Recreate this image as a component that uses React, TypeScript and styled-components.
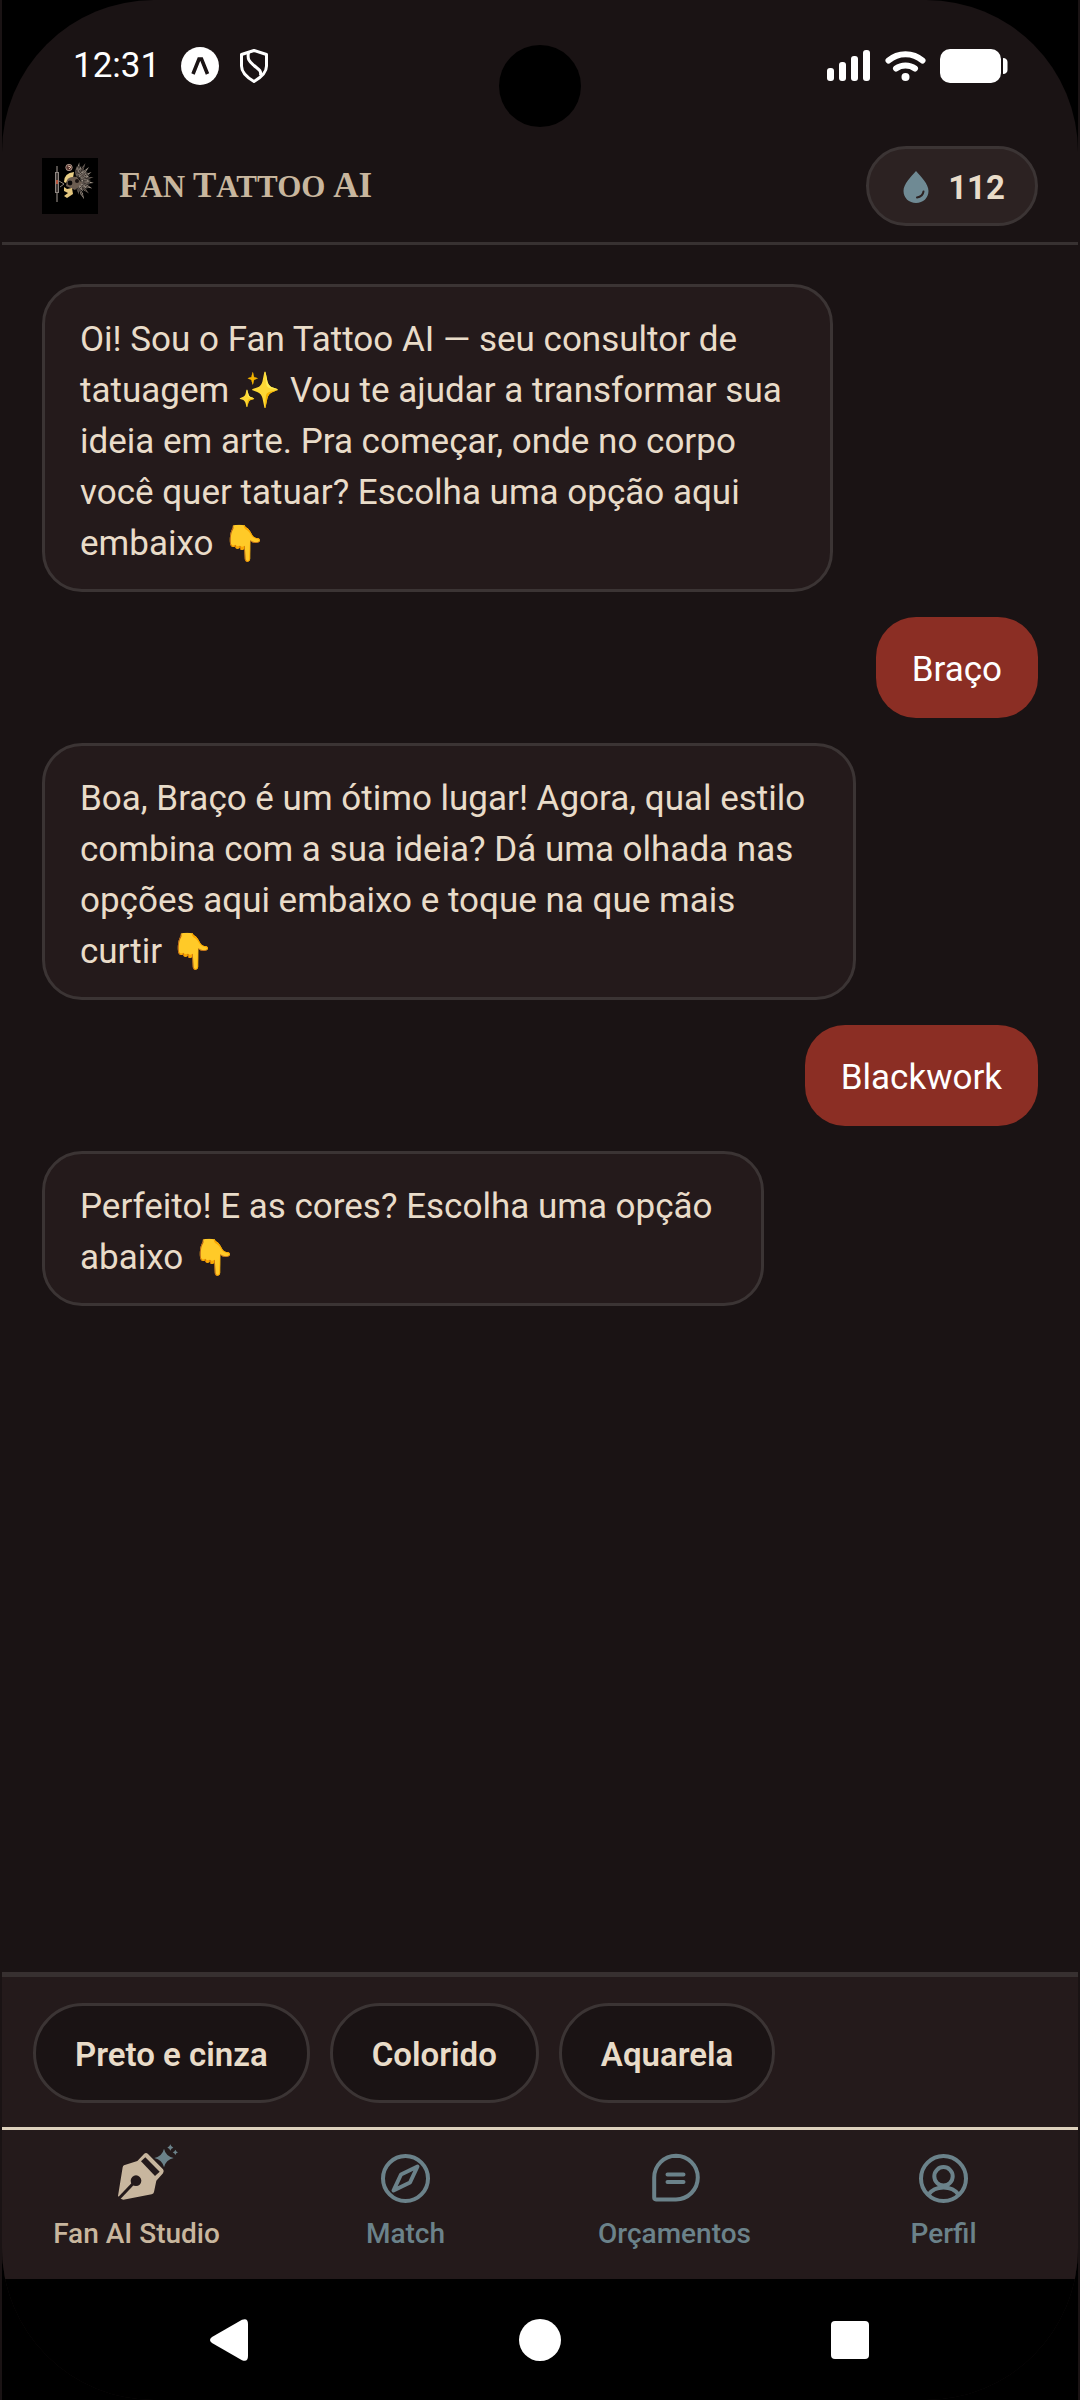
import styled, { createGlobalStyle, css } from "styled-components";
import { useState } from "react";

const colors = {
  background: "#1a1314",
  surface: "#241a1b",
  pill: "#2c2222",
  border: "#3b3434",
  text: "#e9dcc9",
  gold: "#c8b69e",
  muted: "#6b828a",
  accent: "#8b2e24",
};

type Message = {
  from: "bot" | "user";
  text: string;
};

const messages: Message[] = [
  {
    from: "bot",
    text: "Oi! Sou o Fan Tattoo AI — seu consultor de\ntatuagem ✨ Vou te ajudar a transformar sua\nideia em arte. Pra começar, onde no corpo\nvocê quer tatuar? Escolha uma opção aqui\nembaixo 👇",
  },
  { from: "user", text: "Braço" },
  {
    from: "bot",
    text: "Boa, Braço é um ótimo lugar! Agora, qual estilo\ncombina com a sua ideia? Dá uma olhada nas\nopções aqui embaixo e toque na que mais\ncurtir 👇",
  },
  { from: "user", text: "Blackwork" },
  {
    from: "bot",
    text: "Perfeito! E as cores? Escolha uma opção\nabaixo 👇",
  },
];

const options = ["Preto e cinza", "Colorido", "Aquarela"];

export default function App() {
  const [active, setActive] = useState("Fan AI Studio");

  return (
    <>
      <GlobalStyle />
      <Device>
        <Screen>
          <StatusBar />
          <Header>
            <Brand>
              <Logo />
              <Title>
                <Cap>F</Cap>an <Cap>T</Cap>attoo <Cap>AI</Cap>
              </Title>
            </Brand>
            <Credits type="button">
              <DropIcon />
              112
            </Credits>
          </Header>
          <Chat>
            {messages.map((message) => (
              <Bubble key={message.text} $from={message.from}>
                {message.text}
              </Bubble>
            ))}
          </Chat>
          <Options>
            {options.map((option) => (
              <Chip key={option} type="button">
                {option}
              </Chip>
            ))}
          </Options>
          <TabBar>
            {tabs.map(({ label, href, Icon }) => (
              <Tab
                key={label}
                href={href}
                $active={label === active}
                onClick={() => setActive(label)}
              >
                <Icon />
                {label}
              </Tab>
            ))}
          </TabBar>
          <SystemNav />
        </Screen>
      </Device>
    </>
  );
}

const StatusBar = () => (
  <StatusContainer>
    <StatusGroup>
      <Time>12:31</Time>
      <svg width="38" height="38" viewBox="0 0 38 38">
        <circle cx="19" cy="19" r="19" fill="#fff" />
        <path
          d="M12 27 L18 12 H20.5 L26.5 27"
          fill="none"
          stroke={colors.background}
          strokeWidth="3.6"
        />
      </svg>
      <svg width="28" height="34" viewBox="0 0 28 34">
        <g fill="none" stroke="#fff" strokeWidth="3" strokeLinejoin="round">
          <path d="M14 1.5 L26.5 5.5 V17 C26.5 24 20 29 14 32.5 C8 29 1.5 24 1.5 17 V5.5 Z" />
          <path d="M8.5 3.5 C7 11 10 13 14 16.5 C18 20 21.5 21 20.5 26.5" />
        </g>
      </svg>
    </StatusGroup>
    <Camera />
    <StatusGroup $tight>
      <svg width="44" height="32" viewBox="0 0 44 32" fill="#fff">
        <rect x="0" y="18" width="7" height="13" rx="3" />
        <rect x="12" y="12" width="7" height="19" rx="3" />
        <rect x="24" y="6" width="7" height="25" rx="3" />
        <rect x="36" y="0" width="7" height="31" rx="3" />
      </svg>
      <svg width="41" height="32" viewBox="0 0 41 32">
        <g fill="none" stroke="#fff" strokeWidth="6" strokeLinecap="round">
          <path d="M3.5 10.5 C13 2 28 2 37.5 10.5" />
          <path d="M11 18.5 C16.5 14.5 24.5 14.5 30 18.5" />
        </g>
        <circle cx="20.5" cy="27" r="4" fill="#fff" />
      </svg>
      <svg width="68" height="34" viewBox="0 0 68 34" fill="#fff">
        <rect x="0" y="0" width="61" height="34" rx="10" />
        <path d="M63 9 C66 9 67.5 11 67.5 13 V21 C67.5 23 66 25 63 25 Z" />
      </svg>
    </StatusGroup>
  </StatusContainer>
);

const SystemNav = () => (
  <SystemNavContainer>
    <SystemButton type="button" aria-label="Voltar">
      <svg width="44" height="44" viewBox="0 0 44 44" fill="#fff">
        <path d="M4 19 L34 1.8 Q40 -0.5 40 6 V38 Q40 44.5 34 42.2 L4 25 Q0 22 4 19 Z" />
      </svg>
    </SystemButton>
    <SystemButton type="button" aria-label="Início">
      <svg width="44" height="44" viewBox="0 0 44 44" fill="#fff">
        <circle cx="22" cy="22" r="21" />
      </svg>
    </SystemButton>
    <SystemButton type="button" aria-label="Recentes">
      <svg width="44" height="44" viewBox="0 0 44 44" fill="#fff">
        <rect x="3" y="3" width="38" height="38" rx="4" />
      </svg>
    </SystemButton>
  </SystemNavContainer>
);

// headdress feathers, as [angle, length] around the back of the skull
const feathers = [
  [-88, 15], [-80, 19], [-71, 16], [-62, 20], [-54, 14], [-47, 19],
  [-38, 15], [-30, 18], [-21, 15], [-13, 18], [-4, 15], [6, 18],
  [15, 14], [25, 18], [34, 14], [44, 18], [55, 13], [66, 20], [78, 14],
];

const Logo = () => (
  <LogoSvg viewBox="0 0 56 56" role="img" aria-label="Fan Tattoo AI">
    {feathers.map(([angle, length], i) => (
      <g key={angle} transform={`translate(34 23) rotate(${angle})`}>
        <path
          d={`M4 0 L${length - 6} -1.2 L${length} 0 L${length - 6} 1.2 Z`}
          fill={i % 3 === 0 ? "#6e635b" : "#a3978b"}
        />
        <path d={`M7 0 H${length - 4}`} stroke="#2a2421" strokeWidth="0.8" />
      </g>
    ))}
    <circle cx="27" cy="9.5" r="3.2" fill="#5c3a34" stroke="#a38e82" />
    <path d="M26 8 L29 9 L27 11" stroke="#d8b9a0" fill="none" />
    <path d="M22 24 Q22 15 32 14 L31 20 Q26 20 24 25 Z" fill="#e9cf86" />
    <path d="M25 22 Q28 18 35 19 L40 25 L33 32 L24 28 Z" fill="#6b5c50" />
    <circle cx="28" cy="25" r="2.4" fill="#0a0808" />
    <circle cx="35" cy="23" r="2" fill="#1a1210" />
    <path d="M22 29 L25 31 L30 30 L31 36 L25 40 L22 38 L26 35 L22 33 Z" fill="#e3c67e" />
    <path d="M17 23 L22 26 L18 29" stroke="#8d8279" fill="none" />
    <path d="M15 8 V44" stroke="#77706b" strokeWidth="1.4" />
    <rect x="13" y="14" width="4" height="21" fill="#8d8681" />
    <path d="M15 15 V34" stroke="#2b2523" strokeWidth="1.6" />
    <rect x="14" y="22" width="2" height="4" fill="#b5543c" />
  </LogoSvg>
);

const DropIcon = () => (
  <svg width="26" height="32" viewBox="0 0 26 32">
    <path
      d="M13 0 C8 5.5 0.5 13 0.5 20 C0.5 27 6 32 13 32 C20 32 25.5 27 25.5 20 C25.5 13 18 5.5 13 0 Z"
      fill="#6f8a94"
    />
    <path
      d="M14 26.5 C18 26 20 24 20.5 20.5"
      fill="none"
      stroke="#2c2222"
      strokeWidth="2"
      strokeLinecap="round"
    />
  </svg>
);

const StudioIcon = () => (
  <TabSvg viewBox="34 70 147 147">
    <path
      d="M70 104 L110 91 L130 70 Q136 64 142 70 L187 116 Q192 122 187 128 L167 150 L160 184 Q159 190 153 191 L68 207 L60 204 L52 196 L66 110 Q67 105 70 104 Z"
      fill={colors.gold}
    />
    <path d="M121 92 L134 80 L177 123 L163 136 Z" fill={colors.surface} />
    <circle cx="106" cy="150" r="16" fill={colors.surface} />
    <path d="M54 204 L104 152" stroke={colors.surface} strokeWidth="9" />
    <g fill={colors.muted}>
      <path d="M190 54 Q195 76 219 82 Q195 88 190 110 Q185 88 161 82 Q185 76 190 54 Z" />
      <path d="M209 41 Q211 49 218 51 Q211 53 209 60 Q207 53 200 51 Q207 49 209 41 Z" />
      <path d="M224 57 Q226 63 232 65 Q226 67 224 73 Q222 67 216 65 Q222 63 224 57 Z" />
    </g>
  </TabSvg>
);

const CompassIcon = () => (
  <OutlineSvg viewBox="0 0 49 49">
    <circle cx="24.5" cy="24.5" r="22.5" />
    <path d="M36.5 12.5 L29 28.5 L12.5 36.5 L20 20.5 Z" />
  </OutlineSvg>
);

const QuotesIcon = () => (
  <OutlineSvg viewBox="0 0 49 49">
    <path d="M26 1.8 A21.8 21.8 0 0 1 26 45.4 H6 Q4.2 45.4 4.2 43.6 V23.6 A21.8 21.8 0 0 1 26 1.8 Z" />
    <path d="M17.5 20.5 H33.5 M17.5 28 H33.5" />
  </OutlineSvg>
);

const ProfileIcon = () => (
  <OutlineSvg viewBox="0 0 49 49">
    <circle cx="24.5" cy="24.5" r="22.5" />
    <circle cx="24.5" cy="22.3" r="9.2" />
    <path d="M9.5 40.5 C16 31 33 31 39.5 40.5" />
  </OutlineSvg>
);

const tabs = [
  { label: "Fan AI Studio", href: "#studio", Icon: StudioIcon },
  { label: "Match", href: "#match", Icon: CompassIcon },
  { label: "Orçamentos", href: "#orcamentos", Icon: QuotesIcon },
  { label: "Perfil", href: "#perfil", Icon: ProfileIcon },
];

const GlobalStyle = createGlobalStyle`
  * {
    box-sizing: border-box;
  }

  body {
    margin: 0;
    background-color: ${colors.background};
    color: ${colors.text};
    font-family: Roboto, "Noto Color Emoji", sans-serif;
  }

  button {
    font-family: inherit;
    cursor: pointer;
  }

  svg {
    display: block;
    flex-shrink: 0;
  }
`;

const Device = styled.div`
  margin: 0 2px;
  background-color: #000;
`;

const Screen = styled.div`
  display: flex;
  flex-direction: column;
  min-height: 100vh;
  overflow: hidden;
  border-radius: 152px;
  background-color: ${colors.background};
`;

const StatusContainer = styled.div`
  position: relative;
  display: flex;
  justify-content: space-between;
  align-items: center;
  height: 130px;
  padding: 2px 70px 0 71px;
`;

const StatusGroup = styled.div<{ $tight?: boolean }>`
  display: flex;
  align-items: center;
  gap: ${(props) => (props.$tight ? "14px" : "21px")};
`;

const Time = styled.span`
  font-size: 35px;
  line-height: 42px;
  color: #fff;
`;

// sits over the middle of the status bar
const Camera = styled.div`
  position: absolute;
  top: 45px;
  left: calc(50% - 41px);
  width: 82px;
  height: 82px;
  border-radius: 50%;
  background-color: #000;
`;

const Header = styled.header`
  display: flex;
  justify-content: space-between;
  align-items: center;
  padding: 16px 40px;
  border-bottom: 3px solid #373131;
`;

const Brand = styled.div`
  display: flex;
  align-items: center;
  gap: 21px;
`;

const LogoSvg = styled.svg`
  width: 56px;
  height: 56px;
  background-color: #000;
`;

const Title = styled.h1`
  margin: 0;
  font-family: "Liberation Serif", serif;
  font-size: 31px;
  line-height: 40px;
  font-weight: bold;
  text-transform: uppercase;
  color: ${colors.gold};
`;

const Cap = styled.span`
  font-size: 35px;
`;

const Credits = styled.button`
  display: flex;
  align-items: center;
  gap: 19px;
  height: 80px;
  padding: 2px 30px 0 34px;
  border: 3px solid ${colors.border};
  border-radius: 40px;
  background-color: ${colors.pill};
  color: ${colors.text};
  font-size: 33px;
  font-weight: bold;
`;

const Chat = styled.main`
  flex: 1;
  display: flex;
  flex-direction: column;
  align-items: flex-start;
  gap: 25px;
  padding: 39px 40px;
`;

const Bubble = styled.div<{ $from: Message["from"] }>`
  border-radius: 40px;
  font-size: 35px;
  line-height: 51px;
  white-space: pre-line;

  ${(props) =>
    props.$from === "bot"
      ? css`
          padding: 27px 48px 20px 35px;
          border: 3px solid ${colors.border};
          background-color: ${colors.surface};
        `
      : css`
          align-self: flex-end;
          padding: 27px 36px 23px;
          background-color: ${colors.accent};
          color: #fff;
        `}
`;

const Options = styled.div`
  display: flex;
  gap: 20px;
  padding: 26px 31px 24px;
  border-top: 5px solid #373030;
  background-color: ${colors.surface};
`;

const Chip = styled.button`
  height: 100px;
  padding: 2px 39px 0;
  border: 3px solid ${colors.border};
  border-radius: 50px;
  background-color: ${colors.background};
  color: ${colors.text};
  font-size: 33px;
  font-weight: 600;
`;

const TabBar = styled.nav`
  display: grid;
  grid-template-columns: repeat(4, 1fr);
  border-top: 3px solid #ddd1bd;
  background-color: ${colors.surface};
`;

const Tab = styled.a<{ $active: boolean }>`
  display: flex;
  flex-direction: column;
  align-items: center;
  gap: 15px;
  padding: 24px 0 29px;
  color: ${(props) => (props.$active ? colors.gold : colors.muted)};
  font-size: 28px;
  line-height: 32px;
  font-weight: 500;
  text-decoration: none;
`;

const TabSvg = styled.svg`
  width: 49px;
  height: 49px;
  overflow: visible;
`;

const OutlineSvg = styled(TabSvg)`
  fill: none;
  stroke: ${colors.muted};
  stroke-width: 4px;
  stroke-linecap: round;
  stroke-linejoin: round;
`;

const SystemNavContainer = styled.div`
  display: flex;
  justify-content: center;
  align-items: center;
  gap: 266px;
  height: 121px;
  background-color: #000;
`;

const SystemButton = styled.button`
  padding: 0;
  border: 0;
  background: none;
`;
